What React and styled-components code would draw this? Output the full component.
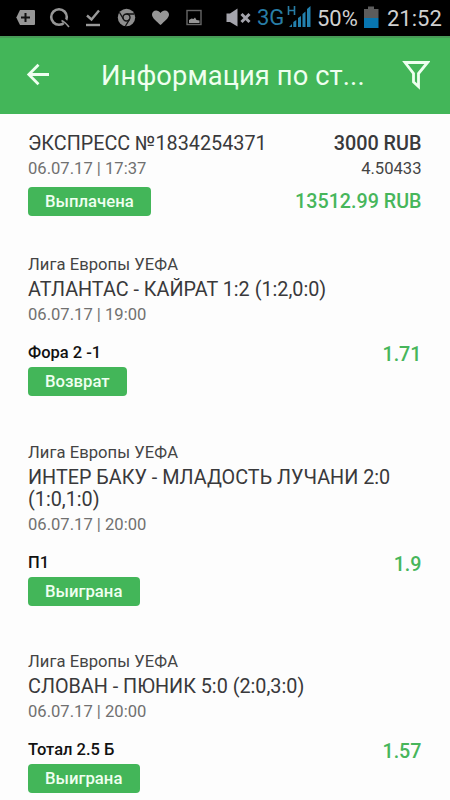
import React from "react";
import styled, { createGlobalStyle } from "styled-components";

const GREEN = "#43b659";

const GlobalStyle = createGlobalStyle`
  * { box-sizing: border-box; }
  body { margin: 0; background: #fdfdfd; font-family: Roboto, "Noto Sans", sans-serif; }
`;

const Screen = styled.div`
  width: 450px;
  height: 800px;
  overflow: hidden;
  background: #fdfdfd;
`;

const StatusBar = styled.div`
  display: flex;
  height: 36px;
  background: #000;
`;

const StatusIcons = styled.svg`
  display: block;
  width: ${(p) => p.$width}px;
  height: 36px;
`;

const StatusText = styled.span`
  width: ${(p) => p.$width}px;
  font-size: ${(p) => p.$size}px;
  line-height: ${(p) => p.$line || 37}px;
  color: ${(p) => p.$color || "#d0d0d0"};
  white-space: nowrap;
`;

const Toolbar = styled.header`
  display: flex;
  align-items: center;
  height: 78px;
  padding: 0 20px 0 23px;
  background: ${GREEN};
  border-top: 2px solid #479b57;
`;

const ToolIcon = styled.svg`
  display: block;
  flex: none;
  width: 30px;
  height: 34px;
  margin-top: -2px;
  fill: none;
  stroke: #eefff0;
  stroke-width: 2.8;
`;

const PageTitle = styled.h1`
  flex: 1;
  margin: 0 0 0 48px;
  font-size: 27.3px;
  font-weight: 400;
  line-height: 34px;
  color: #effff0;
  letter-spacing: 0.1px;
  white-space: nowrap;
`;

const Content = styled.main`
  padding: 18.8px 28.5px 0 28px;
`;

const Summary = styled.section`
  display: flex;
  justify-content: space-between;
  height: 122.5px;
`;

const Column = styled.div`
  display: flex;
  flex-direction: column;
  align-items: ${(p) => (p.$end ? "flex-end" : "flex-start")};
`;

const Title = styled.div`
  font-size: 19.8px;
  line-height: 22.5px;
  color: #39393b;
  font-weight: ${(p) => (p.$strong ? 500 : 400)};
`;

const Small = styled.div`
  margin-top: ${(p) => p.$gap || 4.2}px;
  font-size: 16.6px;
  line-height: 20px;
  color: ${(p) => p.$color || "#707070"};
`;

const Badge = styled.span`
  display: inline-block;
  height: 29px;
  margin-top: ${(p) => p.$gap}px;
  padding: 0 17.5px 0 17px;
  border-radius: 4px;
  background: ${GREEN};
  color: #effff0;
  font-size: 16.7px;
  font-weight: 500;
  line-height: 30.5px;
`;

const Payout = styled.div`
  margin-top: 10.5px;
  font-size: 19.7px;
  font-weight: 500;
  line-height: 23px;
  color: #47b65b;
`;

const Event = styled.article`
  padding-bottom: 46.7px;
`;

const League = styled.div`
  margin-bottom: 4px;
  font-size: 16.6px;
  line-height: 20px;
  color: #444;
  letter-spacing: 0.05px;
`;

const Result = styled.div`
  display: flex;
  justify-content: space-between;
  align-items: flex-start;
  margin-top: 18px;
`;

const Outcome = styled.div`
  font-size: 16.5px;
  font-weight: 500;
  line-height: 20px;
  color: #111;
`;

const Odds = styled.div`
  font-size: 19.7px;
  font-weight: 500;
  line-height: 23px;
  color: #47b65b;
`;

const events = [
  { title: "АТЛАНТАС - КАЙРАТ 1:2 (1:2,0:0)", date: "06.07.17 | 19:00", outcome: "Фора 2 -1", status: "Возврат", odds: "1.71" },
  { title: "ИНТЕР БАКУ - МЛАДОСТЬ ЛУЧАНИ 2:0 (1:0,1:0)", date: "06.07.17 | 20:00", outcome: "П1", status: "Выиграна", odds: "1.9" },
  { title: "СЛОВАН - ПЮНИК 5:0 (2:0,3:0)", date: "06.07.17 | 20:00", outcome: "Тотал 2.5 Б", status: "Выиграна", odds: "1.57" },
];

function NotificationIcons() {
  return (
    <StatusIcons $width={225} viewBox="0 0 225 36">
      <path d="M20 10H34Q35 10 35 11V24Q35 25 34 25H20L16.3 17.5Z" fill="#969696" />
      <path d="M25.5 13v9M21 17.5h9" stroke="#111" strokeWidth="2" />
      <circle cx="59" cy="17" r="7.8" fill="none" stroke="#969696" strokeWidth="2.6" />
      <path d="M61 19Q65 20 69 27" fill="none" stroke="#000" strokeWidth="4" />
      <path d="M61.5 20.5Q65 22 69 27" fill="none" stroke="#969696" strokeWidth="1.6" />
      <path d="M87 15.5L91.5 19.5L99 10.5" fill="none" stroke="#999" strokeWidth="2.4" />
      <path d="M86 25H100" stroke="#999" strokeWidth="2.4" />
      <circle cx="126.5" cy="17.5" r="8.7" fill="#8d8d8d" />
      <circle cx="126.5" cy="17.5" r="3.5" fill="#8d8d8d" stroke="#111" strokeWidth="1.4" />
      <path d="M126.5 14H134.5M123.5 19.2L119.5 12.5M129.5 19.3L125.5 26" stroke="#111" strokeWidth="1.3" />
      <path d="M160.5 25L159.2 23.9C154.5 19.6 152 17.3 152 14.5C152 12.2 153.8 10.4 156.1 10.4C157.8 10.4 159.6 11.4 160.5 13C161.4 11.4 163.2 10.4 164.9 10.4C167.2 10.4 169 12.2 169 14.5C169 17.3 166.5 19.6 161.8 23.9Z" fill="#969696" />
      <rect x="187" y="10.5" width="14" height="14" fill="none" stroke="#666" strokeWidth="1.4" />
      <path d="M189 23V20L191.5 18.5L193.5 19L195 17.5L196.5 20L199.5 20.5V23Z" fill="#969696" />
    </StatusIcons>
  );
}

export default function App() {
  return (
    <>
      <GlobalStyle />
      <Screen>
        <StatusBar>
          <NotificationIcons />
          <StatusIcons $width={32} viewBox="0 0 32 36">
            <path d="M1.5 13.5H5L12.5 8.5V26.5L5 22H1.5Z" fill="#a4a4ac" />
            <path d="M16.5 14L24.5 22M24.5 14L16.5 22" stroke="#a4a4ac" strokeWidth="3" />
          </StatusIcons>
          <StatusText $width={30} $size={22} $line={35} $color="#287da6">3G</StatusText>
          <StatusIcons $width={30} viewBox="0 0 30 36">
            <path d="M1.5 6V15M7.5 6V15M1.5 10.5H7.5" fill="none" stroke="#287da6" strokeWidth="1.6" />
            <path d="M2 27L5 24V27ZM6.3 22L9.3 20V27H6.3ZM11 18L14 16V27H11ZM15.5 14L18.5 11.5V27H15.5ZM20 9L23.5 6V27H20Z" fill="#2380ad" />
          </StatusIcons>
          <StatusText $width={45} $size={22}>50%</StatusText>
          <StatusIcons $width={25} viewBox="0 0 25 36">
            <path d="M6 6.5H12V9H16.5V18H2V9H6Z" fill="#5c5c5c" />
            <rect x="2" y="18" width="14.5" height="10" fill="#0876b1" />
          </StatusIcons>
          <StatusText $width={63} $size={22}>21:52</StatusText>
        </StatusBar>
        <Toolbar>
          <ToolIcon viewBox="0 0 30 34">
            <path d="M26 16.5H6M15.5 6.7L5.8 16.5L15.5 26.3" />
          </ToolIcon>
          <PageTitle>Информация по ст...</PageTitle>
          <ToolIcon viewBox="0 0 30 34">
            <path d="M5 4.5H27.5L18.5 15.5V28.5L13.5 24V15.5Z" />
          </ToolIcon>
        </Toolbar>
        <Content>
          <Summary>
            <Column>
              <Title>ЭКСПРЕСС №1834254371</Title>
              <Small>06.07.17 | 17:37</Small>
              <Badge $gap={7.6}>Выплачена</Badge>
            </Column>
            <Column $end>
              <Title $strong>3000 RUB</Title>
              <Small $color="#444">4.50433</Small>
              <Payout>13512.99 RUB</Payout>
            </Column>
          </Summary>
          {events.map((event) => (
            <Event key={event.title}>
              <League>Лига Европы УЕФА</League>
              <Title>{event.title}</Title>
              <Small $gap={3.6}>{event.date}</Small>
              <Result>
                <Column>
                  <Outcome>{event.outcome}</Outcome>
                  <Badge $gap={3.5}>{event.status}</Badge>
                </Column>
                <Odds>{event.odds}</Odds>
              </Result>
            </Event>
          ))}
        </Content>
      </Screen>
    </>
  );
}
